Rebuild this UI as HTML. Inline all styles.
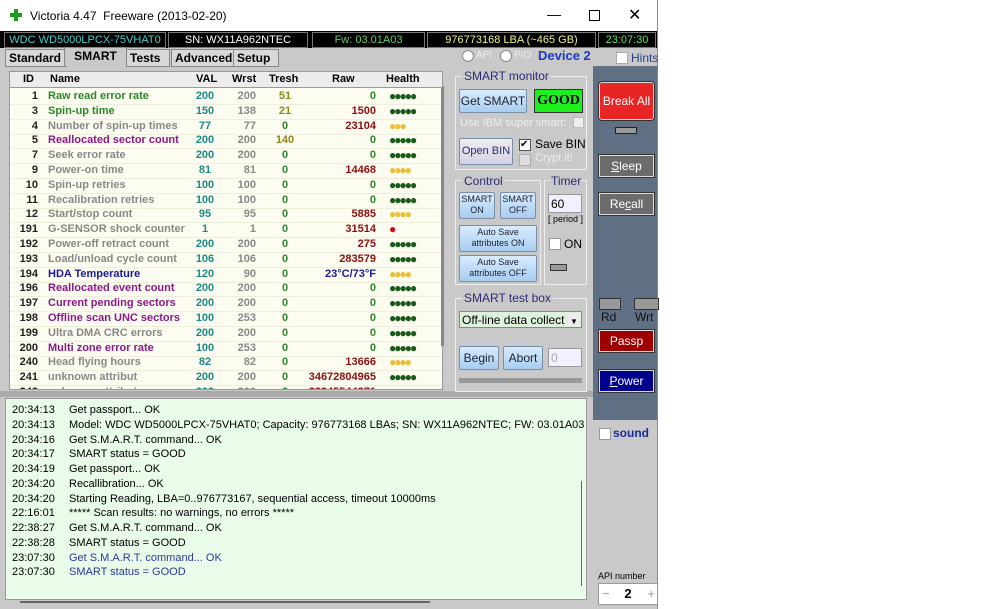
<!DOCTYPE html>
<html><head><meta charset="utf-8"><style>
body{margin:0;width:1000px;height:609px;background:#fff;position:relative;overflow:hidden;font-family:"Liberation Sans",sans-serif}
.a{position:absolute}
.win{left:0;top:0;width:657px;height:609px;background:#c9c9c9;border-right:1px solid #888}
.title{left:0;top:0;width:657px;height:31px;background:#fff;font-size:12px}
.info{left:0;top:31px;width:657px;height:17px;background:#000}
.ib{position:absolute;top:1px;height:14px;border:1px solid #777;font-size:11px;line-height:14px;text-align:center;white-space:nowrap;overflow:hidden}
.tab{position:absolute;top:49px;height:16px;font-size:12px;font-weight:bold;border:1px solid #888;background:#d8d8d8;line-height:16px;padding:0 3px;white-space:nowrap}
.grid{left:9px;top:71px;width:432px;height:317px;background:#fdfcf0;overflow:hidden;border:1px solid #999}
.row{position:absolute;left:0;width:432px;height:15px;font-size:11px;font-weight:bold;line-height:15px;border-bottom:1px solid #eeeedd}
.row span{position:absolute;white-space:nowrap}
.btn{position:absolute;background:linear-gradient(#d8ecff,#a9cdf0);border:1px solid #7a8ea8;color:#223;font-size:12px;text-align:center;border-radius:2px;white-space:nowrap}
.grp{position:absolute;border:1px solid #eee;font-size:12px;color:#2a2a7a}
.gbtn{position:absolute;left:599px;width:53px;height:20px;border:1px solid #ddd;color:#fff;font-size:12px;text-align:center;line-height:20px;outline:1px solid #333}
.log{left:5px;top:398px;width:580px;height:200px;background:#e9fbe9;border:1px solid #999;font-size:11px;overflow:hidden}
.log div{position:absolute;left:6px;white-space:nowrap}
.log b{font-weight:normal;display:inline-block;width:57px}
</style></head><body>
<div class="a win"></div>
<div class="a title">
<div class="a" style="left:10px;top:9px;width:12px;height:12px"><div class="a" style="left:4px;top:0;width:4px;height:12px;background:#1a9e1a"></div><div class="a" style="left:0;top:4px;width:12px;height:4px;background:#1a9e1a"></div></div>
<div class="a" style="left:30px;top:9px">Victoria 4.47&nbsp; Freeware (2013-02-20)</div>
<div class="a" style="left:547px;top:6px;font-size:14px">—</div>
<div class="a" style="left:589px;top:10px;width:9px;height:9px;border:1px solid #000"></div>
<div class="a" style="left:628px;top:5px;font-size:16px">✕</div>
</div>
<div class="a info">
<div class="ib" style="left:4px;width:160px;color:#4cc;">WDC WD5000LPCX-75VHAT0</div>
<div class="ib" style="left:168px;width:138px;color:#fff">SN: WX11A962NTEC</div>
<div class="ib" style="left:312px;width:111px;color:#6c6">Fw: 03.01A03</div>
<div class="ib" style="left:427px;width:167px;color:#ee8">976773168 LBA (~465 GB)</div>
<div class="ib" style="left:598px;width:56px;color:#6d6">23:07:30</div>
</div>
<div class="tab" style="left:5px;width:54px">Standard</div>
<div class="tab" style="left:64px;top:47px;height:18px;width:55px;background:#c9c9c9;border-bottom:none;text-align:center">SMART</div>
<div class="tab" style="left:126px;width:36px">Tests</div>
<div class="tab" style="left:171px;width:56px">Advanced</div>
<div class="tab" style="left:233px;width:38px">Setup</div>
<div class="a" style="left:462px;top:50px;width:10px;height:10px;border-radius:50%;background:#fff;border:1px solid #888"></div>
<div class="a" style="left:476px;top:50px;font-size:10px;color:#eee">API</div>
<div class="a" style="left:500px;top:50px;width:10px;height:10px;border-radius:50%;background:#fff;border:1px solid #888"></div>
<div class="a" style="left:514px;top:50px;font-size:10px;color:#eee">PIO</div>
<div class="a" style="left:538px;top:48px;font-size:13px;font-weight:bold;color:#1a3ac8">Device 2</div>
<div class="a" style="left:616px;top:52px;width:10px;height:10px;background:#fff;border:1px solid #aaa"></div>
<div class="a" style="left:631px;top:51px;font-size:12px;color:#248">Hints</div>
<div class="a" style="left:593px;top:66px;width:64px;height:354px;background:#5f6f84"></div>
<div class="a" style="left:9px;top:71px;width:432px;height:15px;background:#ececec;font-size:11px;font-weight:bold;z-index:2;border:1px solid #999">
<span class="a" style="left:13px;top:1px">ID</span><span class="a" style="left:40px;top:1px">Name</span><span class="a" style="left:186px;top:1px">VAL</span><span class="a" style="left:222px;top:1px">Wrst</span><span class="a" style="left:259px;top:1px">Tresh</span><span class="a" style="left:322px;top:1px">Raw</span><span class="a" style="left:376px;top:1px">Health</span></div>
<div class="a grid" id="g"></div>
<div class="a" style="left:441px;top:86px;width:3px;height:260px;background:#888"></div>
<div class="a" style="left:0;top:391px;width:593px;height:6px;background:#aaa"></div>
<div class="grp" style="left:455px;top:76px;width:130px;height:92px"></div>
<div class="a" style="left:462px;top:69px;font-size:12px;color:#2a2a7a;background:#c9c9c9;padding:0 2px">SMART monitor</div>
<div class="btn" style="left:459px;top:89px;width:66px;height:22px;line-height:22px">Get SMART</div>
<div class="a" style="left:534px;top:89px;width:47px;height:22px;background:#1ef01e;border:1px solid #333;font:bold 14px 'Liberation Serif',serif;line-height:22px;text-align:center">GOOD</div>
<div class="a" style="left:460px;top:117px;font-size:11px;color:#eee">Use IBM super smart:</div>
<div class="a" style="left:573px;top:117px;width:9px;height:9px;background:#eee;border:1px solid #bbb"></div>
<div class="btn" style="left:459px;top:138px;width:52px;height:25px;line-height:25px;background:linear-gradient(#eee,#d3d3e6);color:#2a2a7a;font-size:11px">Open BIN</div>
<div class="a" style="left:519px;top:139px;width:10px;height:10px;background:#fff;border:1px solid #555;font-size:10px;line-height:10px">✔</div>
<div class="a" style="left:535px;top:137px;font-size:12px">Save BIN</div>
<div class="a" style="left:519px;top:154px;width:10px;height:10px;background:#ddd;border:1px solid #aaa"></div>
<div class="a" style="left:535px;top:152px;font-size:11px;color:#eee">Crypt it!</div>
<div class="grp" style="left:455px;top:180px;width:84px;height:103px"></div>
<div class="a" style="left:462px;top:174px;font-size:12px;color:#2a2a7a;background:#c9c9c9;padding:0 2px">Control</div>
<div class="btn" style="left:459px;top:192px;width:34px;height:24px;font-size:9px;line-height:11px;padding-top:1px">SMART<br>ON</div>
<div class="btn" style="left:500px;top:192px;width:34px;height:24px;font-size:9px;line-height:11px;padding-top:1px">SMART<br>OFF</div>
<div class="btn" style="left:459px;top:225px;width:76px;height:24px;font-size:9px;line-height:11px;padding-top:1px">Auto Save<br>attributes ON</div>
<div class="btn" style="left:459px;top:255px;width:76px;height:24px;font-size:9px;line-height:11px;padding-top:1px">Auto Save<br>attributes OFF</div>
<div class="grp" style="left:544px;top:180px;width:41px;height:103px"></div>
<div class="a" style="left:550px;top:174px;font-size:12px;color:#2a2a7a;background:#c9c9c9;padding:0 1px">Timer</div>
<div class="a" style="left:548px;top:194px;width:34px;height:19px;background:#f0f0ff;border:1px solid #999;font-size:12px;line-height:19px;padding-left:2px;box-sizing:border-box">60</div>
<div class="a" style="left:548px;top:214px;font-size:9px">[ period ]</div>
<div class="a" style="left:549px;top:238px;width:10px;height:10px;background:#fff;border:1px solid #999"></div>
<div class="a" style="left:564px;top:237px;font-size:12px">ON</div>
<div class="a" style="left:550px;top:264px;width:15px;height:5px;background:#999;border:1px solid #333"></div>
<div class="grp" style="left:455px;top:298px;width:130px;height:92px"></div>
<div class="a" style="left:462px;top:291px;font-size:12px;color:#2a2a7a;background:#c9c9c9;padding:0 2px">SMART test box</div>
<div class="a" style="left:459px;top:311px;width:123px;height:17px;background:#ddf1dd;border:1px solid #888;font-size:12px;line-height:17px;padding-left:2px;box-sizing:border-box">Off-line data collect<span style="position:absolute;right:1px;top:1px;width:12px;height:13px;background:#eee;font-size:8px;text-align:center">▼</span></div>
<div class="btn" style="left:459px;top:346px;width:38px;height:22px;line-height:22px">Begin</div>
<div class="btn" style="left:503px;top:346px;width:38px;height:22px;line-height:22px">Abort</div>
<div class="a" style="left:548px;top:348px;width:34px;height:19px;background:#f0f0ff;border:1px solid #999;font-size:12px;color:#aaa;line-height:19px;padding-left:2px;box-sizing:border-box">0</div>
<div class="a" style="left:459px;top:378px;width:123px;height:5px;background:#999"></div>
<div class="gbtn" style="left:599px;top:82px;height:36px;line-height:36px;background:#e82424;border-radius:3px">Break All</div>
<div class="a" style="left:615px;top:127px;width:20px;height:5px;background:#999;border:1px solid #222"></div>
<div class="gbtn" style="top:155px;background:#6c6c6c"><u>S</u>leep</div>
<div class="gbtn" style="top:193px;background:#6c6c6c">Re<u>c</u>all</div>
<div class="a" style="left:599px;top:298px;width:20px;height:10px;background:#999;border:1px solid #333"></div>
<div class="a" style="left:634px;top:298px;width:23px;height:10px;background:#999;border:1px solid #333"></div>
<div class="a" style="left:601px;top:310px;font-size:12px;color:#111">Rd</div>
<div class="a" style="left:635px;top:310px;font-size:12px;color:#111">Wrt</div>
<div class="gbtn" style="top:330px;background:#9e0000">Passp</div>
<div class="gbtn" style="top:370px;background:#00008c"><u>P</u>ower</div>
<div class="a" style="left:599px;top:428px;width:10px;height:10px;background:#fff;border:1px solid #999"></div>
<div class="a" style="left:613px;top:426px;font-size:12px;font-weight:bold;color:#1a2a9a">sound</div>
<div class="a" style="left:598px;top:571px;font-size:9px">API number</div>
<div class="a" style="left:598px;top:583px;width:58px;height:20px;background:#fff;border:1px solid #999;font-size:13px;font-weight:bold;text-align:center;line-height:20px"><span style="position:absolute;left:3px;color:#999;font-weight:normal">−</span>2<span style="position:absolute;right:2px;color:#999;font-weight:normal">+</span></div>
<div class="a log">
<div style="top:5px"><b>20:34:13</b>Get passport... OK</div>
<div style="top:20px"><b>20:34:13</b>Model: WDC WD5000LPCX-75VHAT0; Capacity: 976773168 LBAs; SN: WX11A962NTEC; FW: 03.01A03</div>
<div style="top:35px"><b>20:34:16</b>Get S.M.A.R.T. command... OK</div>
<div style="top:49px"><b>20:34:17</b>SMART status = GOOD</div>
<div style="top:64px"><b>20:34:19</b>Get passport... OK</div>
<div style="top:79px"><b>20:34:20</b>Recallibration... OK</div>
<div style="top:94px"><b>20:34:20</b>Starting Reading, LBA=0..976773167, sequential access, timeout 10000ms</div>
<div style="top:108px"><b>22:16:01</b>***** Scan results: no warnings, no errors *****</div>
<div style="top:123px"><b>22:38:27</b>Get S.M.A.R.T. command... OK</div>
<div style="top:138px"><b>22:38:28</b>SMART status = GOOD</div>
<div style="top:153px"><b>23:07:30</b><span style="color:#2a3a9a">Get S.M.A.R.T. command... OK</span></div>
<div style="top:167px"><b>23:07:30</b><span style="color:#2a3a9a">SMART status = GOOD</span></div>
<div style="left:575px;top:82px;width:1px;height:105px;background:#666"></div>
</div>
<div class="a" style="left:20px;top:601px;width:410px;height:2px;background:#666"></div>
<script>
var d=[[1,"Raw read error rate","#2a8a2a",200,200,51,"0",5,"g"],[3,"Spin-up time","#2a8a2a",150,138,21,"1500",5,"g"],[4,"Number of spin-up times","#888",77,77,0,"23104",3,"y"],[5,"Reallocated sector count","#8a1a8a",200,200,140,"0",5,"g"],[7,"Seek error rate","#888",200,200,0,"0",5,"g"],[9,"Power-on time","#888",81,81,0,"14468",4,"y"],[10,"Spin-up retries","#888",100,100,0,"0",5,"g"],[11,"Recalibration retries","#888",100,100,0,"0",5,"g"],[12,"Start/stop count","#888",95,95,0,"5885",4,"y"],[191,"G-SENSOR shock counter","#888",1,1,0,"31514",1,"r"],[192,"Power-off retract count","#888",200,200,0,"275",5,"g"],[193,"Load/unload cycle count","#888",106,106,0,"283579",5,"g"],[194,"HDA Temperature","#1a1a9a",120,90,0,"23°C/73°F",4,"y"],[196,"Reallocated event count","#8a1a8a",200,200,0,"0",5,"g"],[197,"Current pending sectors","#8a1a8a",200,200,0,"0",5,"g"],[198,"Offline scan UNC sectors","#8a1a8a",100,253,0,"0",5,"g"],[199,"Ultra DMA CRC errors","#888",200,200,0,"0",5,"g"],[200,"Multi zone error rate","#8a1a8a",100,253,0,"0",5,"g"],[240,"Head flying hours","#888",82,82,0,"13666",4,"y"],[241,"unknown attribut","#888",200,200,0,"34672804965",5,"g"],[242,"unknown attribut","#888",200,200,0,"33945544371",5,"g"]];
var h="";d.forEach(function(r,i){var t=17+i*14.8;var rc=r[6]=="0"?"#2a8a2a":(r[0]==194?"#1a1a9a":"#8a1010");var hc={g:"#1a5a1a",y:"#e8c040",r:"#d01010"}[r[8]];
h+='<div class="row" style="top:'+t+'px"><span style="right:404px;color:#222">'+r[0]+'</span><span style="left:38px;color:'+r[2]+'">'+r[1]+'</span><span style="left:180px;width:30px;text-align:center;color:#1a8a8a">'+r[3]+'</span><span style="left:216px;width:30px;text-align:right;color:#888">'+r[4]+'</span><span style="left:260px;width:30px;text-align:center;color:'+(r[5]?"#8a8a1a":"#2a8a2a")+'">'+r[5]+'</span><span style="right:66px;color:'+rc+'">'+r[6]+'</span><span style="left:379px;color:'+hc+';font-size:12px;letter-spacing:-2px">'+"●●●●●".slice(0,r[7])+'</span></div>';});
document.getElementById("g").innerHTML=h;
</script>
</body></html>
